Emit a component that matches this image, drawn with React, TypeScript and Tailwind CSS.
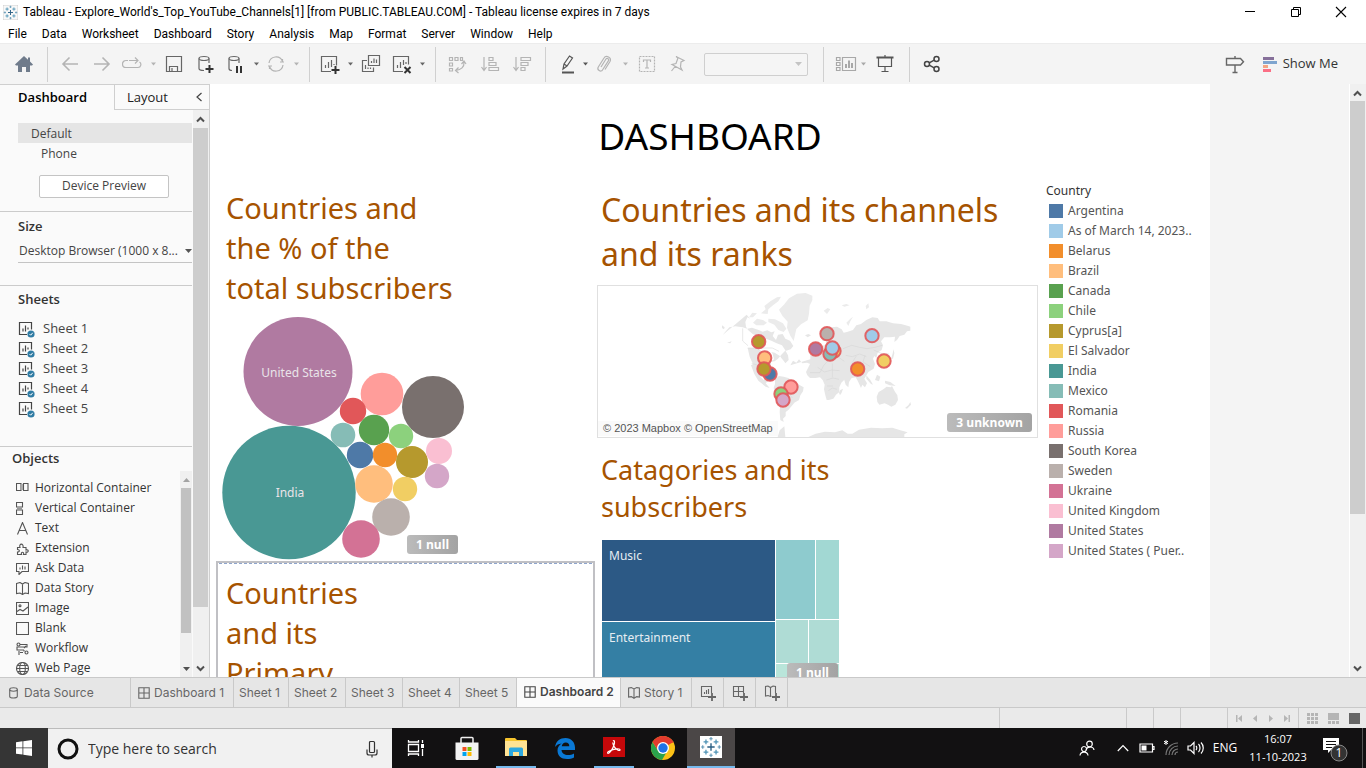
import React from "react";

type Kids = { children?: React.ReactNode };

function Ico({ w = 20, h = 20, children, sw = 1.2 }: Kids & { w?: number; h?: number; sw?: number }) {
  return (
    <svg width={w} height={h} viewBox={`0 0 ${w} ${h}`} fill="none" stroke="currentColor" strokeWidth={sw} className="shrink-0" aria-hidden="true">
      {children}
    </svg>
  );
}

function Tool({ label, cls, children }: Kids & { label: string; cls: string }) {
  return (
    <button aria-label={label} className={`flex h-full shrink-0 items-center justify-center ${cls}`}>
      {children}
    </button>
  );
}

function Caret() {
  return (
    <svg width="5" height="4" viewBox="0 0 5 4" fill="currentColor" aria-hidden="true">
      <path d="M0 0.5h5L2.5 3.5z" />
    </svg>
  );
}

function TableauMark({ size, plain }: { size: number; plain?: boolean }) {
  const small: [number, number][] = [[6.5, 6.5], [17.5, 6.5], [6.5, 17.5], [17.5, 17.5]];
  const tiny: [number, number][] = [[12, 3], [12, 21], [3, 12], [21, 12]];
  return (
    <svg width={size} height={size} viewBox="0 0 24 24" fill="none" aria-hidden="true">
      {!plain && <rect x="0" y="0" width="24" height="24" fill="#f8f8f8" stroke="#bbb" strokeWidth="1" />}
      <path d="M12 8v8M8 12h8" stroke="#2a5f83" strokeWidth="1.5" />
      {small.map(([x, y]) => (
        <path key={`${x}-${y}`} d={`M${x} ${y - 2.6}v5.2M${x - 2.6} ${y}h5.2`} stroke="#4d92b5" strokeWidth="1.4" />
      ))}
      {tiny.map(([x, y]) => (
        <path key={`${x}-${y}`} d={`M${x} ${y - 1.8}v3.6M${x - 1.8} ${y}h3.6`} stroke="#5f96b4" strokeWidth="1.2" />
      ))}
    </svg>
  );
}

const menus = ["File", "Data", "Worksheet", "Dashboard", "Story", "Analysis", "Map", "Format", "Server", "Window", "Help"];

function TitleBar() {
  return (
    <header className="flex h-6 shrink-0 items-center bg-white pl-[3px] text-[12px]">
      <TableauMark size={15} />
      <h1 className="ml-[5px] flex-1 whitespace-nowrap">
        Tableau - Explore_World's_Top_YouTube_Channels[1] [from PUBLIC.TABLEAU.COM] - Tableau license expires in 7 days
      </h1>
      <button aria-label="Minimize" className="flex h-full w-[46px] items-center justify-center">
        <Ico w={12} h={12} sw={1}><path d="M1 5.500h10" /></Ico>
      </button>
      <button aria-label="Restore" className="flex h-full w-[45px] items-center justify-center">
        <Ico w={12} h={12} sw={1}><path d="M1.500 3.500h7v7h-7zM3.500 3.500v-2h7v7h-2" /></Ico>
      </button>
      <button aria-label="Close" className="flex h-full w-12 items-center justify-center pr-0.5">
        <Ico w={12} h={12} sw={1.1}><path d="M1 1l10 10M11 1L1 11" /></Ico>
      </button>
    </header>
  );
}

function MenuBar() {
  return (
    <nav className="flex h-[19px] shrink-0 items-center gap-[15px] bg-white pl-2 text-[12px]">
      {menus.map((m) => (
        <button key={m}>{m}</button>
      ))}
    </nav>
  );
}

function Sep() {
  return <div className="w-px shrink-0 self-stretch bg-[#d0d0d0]" />;
}

function Toolbar() {
  return (
    <div className="flex h-[41px] shrink-0 items-center border-t border-[#ececec] bg-[#f4f4f4] text-[#666]">
      <div className="flex h-[35px] shrink-0 items-center">
        <Tool label="Home" cls="w-[47px] text-[#6f7b8b]">
          <svg width="18" height="16" viewBox="0 0 18 16" fill="currentColor" aria-hidden="true"><path d="M9 0l4 3.7V1.5h2v4L18 8.600l-1 .9h-2V16h-4v-5H7v5H3V9.500H1l-1-.9z" /></svg>
        </Tool>
        <Sep />
        <div className="flex h-full items-center pl-1.5 pr-[5px]">
          <Tool label="Undo" cls="w-8 text-[#b4b4b4]"><Ico sw={1.6}><path d="M3 10h15M9.500 3.500L3 10l6.500 6.500" /></Ico></Tool>
          <Tool label="Redo" cls="w-8 text-[#b4b4b4]"><Ico sw={1.6}><path d="M2 10h15M10.500 3.500L17 10l-6.500 6.500" /></Ico></Tool>
          <Tool label="Replay" cls="w-7 text-[#b4b4b4]"><Ico><path d="M6 6.500H4a3 3 0 0 0 0 7h12a3 3 0 0 0 1.500-5.500M7 6.500h9M13 3.500l3 3-3 3" /></Ico></Tool>
          <Tool label="Replay options" cls="w-3.5 text-[#b4b4b4]"><Caret /></Tool>
          <Tool label="Save" cls="w-7"><Ico><path d="M2.500 2.500h15v15h-15zM5.500 17v-4.500h8V17M8 14v3" /></Ico></Tool>
          <Tool label="New data source" cls="w-[34px]"><Ico><ellipse cx="9" cy="4.500" rx="5" ry="2" /><path d="M4 4.500v10c0 1 2 2 5 2M14 4.500V9" /><path d="M14.500 11v8M10.500 15h8" stroke="#333" strokeWidth="2" /></Ico></Tool>
          <Tool label="Pause updates" cls="w-[26px]"><Ico><ellipse cx="9" cy="4.500" rx="5" ry="2" /><path d="M4 4.500v10c0 1 1 2 3 2M14 4.500V9" /><path d="M12 12v7M16 12v7" stroke="#333" strokeWidth="2" /></Ico></Tool>
          <Tool label="Pause options" cls="w-4"><Caret /></Tool>
          <Tool label="Refresh" cls="w-6 text-[#b4b4b4]"><Ico><path d="M3 9a7 7 0 0 1 13.500-1.500M17 11a7 7 0 0 1-13.500 1.500M14 8h4M16.500 8V5M6 12H2M3.500 12v3" /></Ico></Tool>
          <Tool label="Refresh options" cls="w-4 text-[#b4b4b4]"><Caret /></Tool>
        </div>
        <Sep />
        <div className="flex h-full items-center pl-1.5 pr-[9px]">
          <Tool label="New worksheet" cls="w-7"><Ico><path d="M11 17.500H1.500v-15h15v9M5.500 14v-3M8.500 14V8M11.500 13V6M14 11v-1" /><path d="M15.500 12v8M11.500 16h8" stroke="#333" strokeWidth="2" /></Ico></Tool>
          <Tool label="New worksheet options" cls="w-3"><Caret /></Tool>
          <Tool label="Duplicate" cls="w-[30px]"><Ico><path d="M7.500 1.500h11v10h-11zM10.500 9V7M13 9V4.500M15.500 9V5.500M6 6.500H1.500v11h11v-4M4.500 15v-4M7 15v-1.500M9.500 15v-1.500" /></Ico></Tool>
          <Tool label="Clear" cls="w-8"><Ico><path d="M11 17.500H1.500v-15h15v8M5.500 14v-3M8.500 14V8M11.500 11V6M14 10V8" /><path d="M12.500 13l6 6M18.500 13l-6 6" stroke="#333" strokeWidth="2" /></Ico></Tool>
          <Tool label="Clear options" cls="w-2"><Caret /></Tool>
        </div>
        <Sep />
        <div className="flex h-full items-center pl-[5px] pr-2 text-[#b4b4b4]">
          <Tool label="Swap rows and columns" cls="w-8"><Ico><path d="M2.500 3.500h3v3h-3zM8 3.500h3v3H8zM13.500 3.500h2v3h-2zM2.500 9h3v3h-3zM2.500 14.500h3v2.500h-3zM17 8c.5 5-3 8-8 8.500M14.500 10L17 7l2 3M11.500 13.500L8.500 16.500l3 2.500" /></Ico></Tool>
          <Tool label="Sort ascending" cls="w-[34px]"><Ico><path d="M4 3v13M1.500 13L4 16.500 6.500 13M9 3.500h4v3H9zM9 8.500h7v3H9zM9 13.500h9.500v3H9z" /></Ico></Tool>
          <Tool label="Sort descending" cls="w-[30px]"><Ico><path d="M4 3v13M1.500 13L4 16.500 6.500 13M9 3.500h9.500v3H9zM9 8.500h7v3H9zM9 13.500h4v3H9z" /></Ico></Tool>
        </div>
        <Sep />
        <div className="flex h-full items-center pl-2.5 pr-[15px] text-[#b4b4b4]">
          <Tool label="Highlight" cls="w-6 text-[#555]"><Ico><path d="M5 15l1-5L11.500 2l3 2L9 12zM6 10l3 2" /><path d="M4 18.500h12" strokeWidth="2" /></Ico></Tool>
          <Tool label="Highlight options" cls="w-2.5 text-[#555]"><Caret /></Tool>
          <Tool label="Attach" cls="w-7"><Ico><path d="M7 13l5-8c1-1.500 3.500 0 2.500 1.600L8.500 16c-1.500 2.500-6 0-4.200-3L10 4c2-3.500 8-.5 6 3.500l-5 8" /></Ico></Tool>
          <Tool label="Attach options" cls="w-3.5"><Caret /></Tool>
          <Tool label="Show labels" cls="w-[30px]"><Ico><path d="M2.500 2.500h15v15h-15z" strokeDasharray="2 1" /><path d="M6.500 8V6h7v2M10 6v8M8 14h4" /></Ico></Tool>
          <Tool label="Fix axes" cls="w-[30px]"><Ico><path d="M9 2.500l8 4-3 1.500-.5 5 1.500 3-10-5.500 4-1 2-5.500zM8.500 12l-4 5" /></Ico></Tool>
          <select aria-label="Fit" disabled className="ml-3 h-[23px] w-[104px] appearance-none rounded-xs border border-[#cfcfcf] bg-[#f5f5f5]" />
          <span className="-ml-[13px] flex w-[13px] text-[#c4c4c4]"><svg width="7" height="4" viewBox="0 0 7 4" fill="currentColor" aria-hidden="true"><path d="M0 0h7L3.500 4z" /></svg></span>
        </div>
        <Sep />
        <div className="flex h-full items-center pl-2.5 pr-[7px] text-[#a8a8a8]">
          <Tool label="Show or hide cards" cls="w-6"><Ico w={22}><path d="M1.500 3.500h3.500v3H1.500zM1.500 8.500h3.500v3H1.500zM1.500 13.500h3.500v3H1.500zM7.500 3.500h13v13h-13z" /><path d="M11 14v-4M14 14V6.500M17 14V9" strokeWidth="2" /></Ico></Tool>
          <Tool label="Card options" cls="w-2.5"><Caret /></Tool>
          <Tool label="Presentation mode" cls="w-[34px] text-[#555]"><Ico><path d="M3.500 4v8.500h13V4M10 12.500V17M6.500 17.500h7M10 1v2" /><path d="M1.500 3.500h17" strokeWidth="2" /></Ico></Tool>
        </div>
        <Sep />
        <Tool label="Share" cls="ml-2.5 w-6 text-[#444]"><Ico sw={1.5}><circle cx="5" cy="10" r="2.500" /><circle cx="14.500" cy="5" r="2.500" /><circle cx="14.500" cy="15" r="2.500" /><path d="M7.200 8.800l5-2.600M7.200 11.200l5 2.600" /></Ico></Tool>
      </div>
      <div className="flex-1" />
      <Tool label="Guide" cls="w-8 text-[#666]"><Ico sw={1.4}><path d="M1.500 4.500h14l3 3.200-3 3.300h-14zM10 2v2.500M10 11v7M7.500 18.500h5" /></Ico></Tool>
      <button className="mr-7 flex items-center gap-1.5 pl-3 font-['Open_Sans',sans-serif] text-[13px] text-[#333]">
        <svg width="14" height="15" viewBox="0 0 14 15" aria-hidden="true">
          <path fill="#86709a" d="M0 0h11v3H0z" /><path fill="#7fa5cf" d="M0 4h14v3H0z" /><path fill="#f4a582" d="M0 8h5v3H0z" /><path fill="#fb6f85" d="M0 12h8v3H0z" />
        </svg>
        Show Me
      </button>
    </div>
  );
}

const sheets = ["Sheet 1", "Sheet 2", "Sheet 3", "Sheet 4", "Sheet 5"];

const objects: { name: string; icon: React.ReactNode }[] = [
  { name: "Horizontal Container", icon: <><path d="M.5 1.500h4.500v7H.5zM7.500 1.500H12v7H7.500z" /><path d="M5 2h2v6H5z" fill="#aaa" stroke="none" /></> },
  { name: "Vertical Container", icon: <><path d="M.5 .5h6V5h-6zM.5 8h6v4.500h-6z" /><path d="M1 5.500h5V8H1z" fill="#999" stroke="none" /></> },
  { name: "Text", icon: <path d="M1.500 12.500L6.500 .5l5 12M3.500 8.500h6" /> },
  { name: "Extension", icon: <path d="M1.500 5.500H4C2.500 1 8 1 7 5.500h3V8c3-1 3 3 0 2v2.500H7.500c1-3-3-3-2 0h-4V10c2.500 0 2.500-2.500 0-2.500z" /> },
  { name: "Ask Data", icon: <><path d="M.5 1.500h12v8H6l-3 3v-3H.5z" /><path d="M4 7.500v-2M6.500 7.500v-4M9 7.500v-3" /></> },
  { name: "Data Story", icon: <path d="M.5 1.500l3.500-1 2.500 1.500L9 .5l3.500 1v10l-3.500-.5-2.500 1.500L4 11l-3.500.5zM6.500 2v10" /> },
  { name: "Image", icon: <><path d="M.5 .5h12v12H.5zM1 9.500l3-2 3 1.500 5-4" /><circle cx="4" cy="3.800" r="1" /></> },
  { name: "Blank", icon: <path d="M.5 .5h12v12H.5z" /> },
  { name: "Workflow", icon: <><circle cx="2.500" cy="2.500" r="1.500" /><circle cx="10.500" cy="10.500" r="1.500" /><path d="M4 2.500h7v2.500H1v3h7M8 6l2-2M4 10.500h3M3 9v4M8 9.500V8" /></> },
  { name: "Web Page", icon: <><circle cx="6.500" cy="6.500" r="6" /><ellipse cx="6.500" cy="6.500" rx="2.800" ry="6" /><path d="M.5 6.500h12M1.500 3.500h10M1.500 9.500h10" /></> },
];

function Chevron({ up }: { up?: boolean }) {
  return <Ico w={9} h={7} sw={2}>{up ? <path d="M1 5.500l3.500-3.500L8 5.500" /> : <path d="M1 1.500L4.500 5 8 1.500" />}</Ico>;
}

function SidePanel() {
  return (
    <aside className="flex w-[210px] shrink-0 flex-col border-r border-[#cfcfcf] bg-[#fafafa] font-['Open_Sans',sans-serif] text-[#444]">
      <div className="flex h-[26px] shrink-0 border-t border-[#cfcfcf] text-[13px]">
        <button className="w-[114px] pr-[27px] pt-px text-right font-semibold text-black">Dashboard</button>
        <div className="flex flex-1 items-center justify-between border-b border-l border-[#cfcfcf] pl-3 pr-1.5">
          <button className="pt-px text-[#222]">Layout</button>
          <button aria-label="Collapse panel"><Ico w={8} h={10}><path d="M6.500 1L2 5l4.500 4" /></Ico></button>
        </div>
      </div>
      <div className="flex min-h-0 flex-1">
        <div className="flex min-w-0 flex-1 flex-col">
          <section className="pb-[13px] pl-[18px] pt-[13px] text-[12px]">
            <button className="block h-5 w-full bg-[#e5e5e5] pl-[13px] pt-px text-left">Default</button>
            <button className="block h-5 w-full pl-[23px] pt-px text-left">Phone</button>
            <button className="ml-[21px] mt-3 block h-[23px] w-[130px] rounded-xs border border-[#c4c4c4] bg-white pb-px">Device Preview</button>
          </section>
          <section className="border-t border-[#cbcbcb] pb-[22px] pl-[18px] pt-1 text-[12px]">
            <label htmlFor="size" className="block h-5 text-[13px] font-semibold leading-5 text-[#333]">Size</label>
            <div className="mt-1 flex h-[23px] items-center border-b border-[#c4c4c4]">
              <select id="size" className="min-w-0 flex-1 appearance-none whitespace-nowrap pl-px">
                <option>Desktop Browser (1000 x 8...</option>
              </select>
              <svg width="7" height="4" viewBox="0 0 7 4" fill="#555" aria-hidden="true"><path d="M0 0h7L3.500 4z" /></svg>
            </div>
          </section>
          <section className="border-t border-[#cbcbcb] pb-[27px] pl-[18px] pt-[3px]">
            <h2 className="h-5 text-[13px] font-semibold leading-5 text-[#333]">Sheets</h2>
            <ul className="mt-2.5 text-[13px]">
              {sheets.map((s) => (
                <li key={s} className="flex h-5 items-center gap-2">
                  <Ico w={17} h={17}>
                    <path d="M9 13.500H1.500v-12h12v7M5 10.500v-3M7.500 10.500v-6M10 8.500v-2" />
                    <circle cx="13" cy="13" r="3.600" fill="#2f7ba3" stroke="none" />
                    <path d="M11.500 13l1.200 1.200 2-2.400" stroke="white" strokeWidth="1" />
                  </Ico>
                  {s}
                </li>
              ))}
            </ul>
          </section>
          <section className="flex min-h-0 flex-1 flex-col border-t border-[#cbcbcb] pt-px">
            <h2 className="h-5 shrink-0 pl-3 text-[13px] font-semibold leading-5 text-[#333]">Objects</h2>
            <div className="mt-[3px] flex min-h-0 flex-1">
              <ul className="flex-1 overflow-hidden pl-4 pt-[7px] text-[12px]">
                {objects.map((o) => (
                  <li key={o.name} className="flex h-5 items-center gap-1.5 text-[#555]">
                    <Ico w={13} h={13} sw={1.1}>{o.icon}</Ico>
                    <span className="whitespace-nowrap text-[#333]">{o.name}</span>
                  </li>
                ))}
              </ul>
              <div className="flex w-3 flex-col items-center bg-[#f0f0f0] pb-1.5 pt-[7px]">
                <svg width="7" height="4" viewBox="0 0 7 4" fill="#a3a3a3" aria-hidden="true"><path d="M0 4h7L3.500 0z" /></svg>
                <div className="mt-1.5 w-2.5 flex-1 bg-[#c1c1c1]" />
                <div className="h-[34px]" />
                <svg width="7" height="4" viewBox="0 0 7 4" fill="#505050" aria-hidden="true"><path d="M0 0h7L3.500 4z" /></svg>
              </div>
            </div>
          </section>
        </div>
        <div className="ml-px flex w-4 flex-col items-center bg-[#f0f0f0] pb-[5px] pr-px pt-1.5 text-[#505050]">
          <Chevron up />
          <div className="mt-[5px] w-[15px] flex-1 bg-[#cdcdcd]" />
          <div className="h-[58px]" />
          <Chevron />
        </div>
      </div>
    </aside>
  );
}

/* x, y, radius and fill, in a box whose origin is the chart's top-left corner */
const bubbles: [number, number, number, string][] = [
  [82, 61.500, 54.500, "#b07aa1"],
  [73, 182.500, 66.700, "#499894"],
  [166, 84, 21.300, "#ff9d9a"],
  [217, 97, 31, "#79706e"],
  [137, 101, 13.200, "#e15759"],
  [127, 125, 12.300, "#86bcb6"],
  [158, 120, 15.200, "#59a14f"],
  [185, 126, 12.200, "#8cd17d"],
  [144, 145, 13.200, "#4e79a7"],
  [169, 145, 12.200, "#f28e2b"],
  [196, 152, 16, "#b6992d"],
  [223, 141, 13, "#fabfd2"],
  [221, 166, 12.200, "#d4a6c8"],
  [158, 174, 18.800, "#ffbe7d"],
  [189, 179, 12.200, "#f1ce63"],
  [175, 207, 18.800, "#bab0ac"],
  [145, 229, 18.800, "#d37295"],
];

function Badge({ children }: Kids) {
  return (
    <button className="block h-[19px] rounded-[3px] bg-linear-to-r from-[#bbbbbb] to-[#a3a3a3] px-[9px] font-['Open_Sans',sans-serif] text-[12px] font-bold leading-[19px] text-white">
      {children}
    </button>
  );
}

function BubbleChart() {
  return (
    <div className="relative mt-0.5 h-[251px]">
      <svg width="260" height="251" viewBox="0 0 260 251" role="img" aria-label="Share of subscribers by country">
        {bubbles.map(([x, y, r, c]) => (
          <circle key={`${x}-${y}`} cx={x} cy={y} r={r} fill={c} />
        ))}
        <g fill="#e9e4e9" fontSize="12" textAnchor="middle">
          <text x="83" y="67">United States</text>
          <text x="74" y="187">India</text>
        </g>
      </svg>
      <div className="absolute left-[191px] top-[225px]"><Badge>1 null</Badge></div>
    </div>
  );
}

const marks: [number, number, string][] = [
  [491, 185, "#b6992d"], [509, 234, "#ffbe7d"], [525, 282, "#4e79a7"], [507, 267, "#b6992d"],
  [588, 321, "#ff9d9a"], [558, 342, "#8cd17d"], [564, 360, "#d4a6c8"],
  [696, 161, "#bab0ac"], [662, 207, "#b07aa1"], [717, 213, "#f1ce63"], [705, 222, "#86bcb6"], [712, 204, "#a0cbe8"],
  [831, 167, "#a0cbe8"], [867, 243, "#f1ce63"], [788, 267, "#f28e2b"],
];

function WorldMap() {
  return (
    <div className="relative mt-[9px] h-[153px] border border-[#e0e0e0]">
      <svg width="100%" height="151" viewBox="9 18 1317 453" role="img" aria-label="Map of channels by country">
        <g fill="#e6e6e6">
          <path d="M381 136l8 6-2 6-6-4zM396 188l14-4-4 6zM383 165l8-10 12-13 18-3 22 3 14 4 14-3 20 7 12 5 14-4 12 6 10-3-6 14 10 12 6-16 14-2 8 14 14 6 10 16-8 10-18 6-10 10-10 12-10 8-14 2 12-8-4-16-4-6 10 2 16 10 4 6 8 10 4 6 10-10-2-14-10-18-8-12-16-6-16-8-16-6-20-4-20-10-14-12-6-10-2-14 6-14 8 4-10-12-2z" />
          <path d="M488 204l14 12-6 30-8 14-16-12-8-18-6-26zM494 240l34 2 0 22-6 8-12-4-12 8-2 14 10 10 12-6 2 8-8 8 12 14-12-4-22-18-12-20-10-26z" />
          <path d="M540 298l12-10 14 2 14 4 12 10 16 8 18 10-2 12-8 12-4 14-14 8-8 10-10 12-8 6 0 12-8 8 2 10-10-6-2-24 2-28-8-18-8-14-4-12 4-12z" />
          <path d="M645 252l14-10 22-2 16 4 12 4 16 0 8 14 8 14 6 8 12 0-8 12-12 12-6 14 0 14-10 8-8 12-14 4-6 0-4-14-4-18 2-14-6-14-8-8-14 2-16 0-8-8-4-10z" />
          <path d="M646 238v-14l14-2-4-12 14-4 12-8 10-4 2-10-12-2-4-12 12-16 18-12 18-2 14 8 6 10 10-2 18-6 10-14 14-4 16-12 18-8 16 2 6 10 20 0 20 6 24 2 22 6 6 2v12l-10 2-8 10-14 4-8 12-8 6 2-16-14 2-18 0-10 12 6 12-4 14-12 8-4 16-6-6-4 8 6 16-4 14-16 10-6 10-6 10 8 14-6 12-8-8-4 10-10-22-6-10-12 2-8 12-2 16-8-8-6-20-8-8-14-4-4 12-18 12-6 4-10-16-12-20-6-10-18-2-4-10-10-4-14 2-10-12-8 10-10-6-8 14z" />
          <path d="M845 350l6-14 14-8 10-8 12 2 4-4 8 16 8 12 2 14-8 14-12 6-10-6-10-4-16 4-6-8zM930 384l10-8 6-10 2 8-12 12zM744 326l-4 12-5 8-3-8 4-8zM814 286l12 14 8 14-6-2-14-16zM846 284l10 6-4 14-12-4zM870 302l16 4 16 12-18-2-14-6zM888 236l4-12 4-16 2 12-4 16zM652 208l6-16 6 12 2 8zM630 166l10-4 8 4-10 6z" />
          <path d="M640 471l22-10 28-6 30 2 22-6 16 10 14 0 20-12 36-6 34 2 30-2 24 8 22 6-10 6v8zM548 471l6-20 14-12 3 32z" />
        </g>
        <g fill="#ebebeb">
          <path d="M596 183l-10-16-10-24 2-18-16-18-10-18 16-16 14-18 24-14 26-2 20 8 0 14-8 16-2 24-4 20-20 12-14 14z" />
          <path d="M498 100l14-12-4-10 18-14 20-12 12-2-8 14-16 12-14 12-2 14zM474 128l12-12 18 4 12 8-10 8-22 0zM520 116l20 2 24 12 10 16-8 10-16-6-12-16-18-8zM462 112l10-14 14 2-12 12zM686 92l12-8 8 4-10 14zM754 128l12-12 8-6-8 14-6 14zM812 78l8-8 2 12-8 6zM740 76l14-4 10 4-16 4z" />
        </g>
        <g fill="none" stroke="#d2d2d2" strokeWidth="1.500">
          <path d="M443 145v38l16 14M458 204h74l20 10M470 250l26 8M645 278h30l10-20 12-14M668 262l20 14 22-6 24 2M694 300l20-6 18 4M700 332l12-8 14 4M696 318h18M712 250v42M564 312l14 22 14 20M552 330l16-2M556 372l14-8M744 206l26-10 24 6 22 4 24-4 22-6M752 226l20 4 22-8 20 8M770 250l14-22M810 226l-6 20 22 14M728 230l20 14M836 210l22 10 24 2" />
        </g>
        {marks.map(([x, y, c]) => (
          <circle key={`${x}-${y}`} cx={x} cy={y} r="20" fill={c} stroke="#e15759" strokeWidth="6" strokeOpacity="0.9" />
        ))}
      </svg>
      <div className="absolute bottom-px left-0 bg-[#fafafa] px-[5px] font-['Liberation_Sans',sans-serif] text-[11px] leading-[15px] text-[#555]">© 2023 Mapbox © OpenStreetMap</div>
      <div className="absolute bottom-[5px] right-[5px]"><Badge>3 unknown</Badge></div>
    </div>
  );
}

function Treemap() {
  return (
    <div className="relative ml-[5px] mt-[15px] flex h-[180px] w-[237px] gap-px text-[12px] text-[#e6edf2]">
      <div className="flex w-[173px] flex-col gap-px">
        <div className="h-[81px] bg-[#2c5985] px-[7px] pt-[7px]">Music</div>
        <div className="flex-1 bg-[#347fa4] px-[7px] pt-[7px]">Entertainment</div>
      </div>
      <div className="flex flex-1 flex-col gap-px">
        <div className="flex h-[79px] gap-px"><div className="w-[39px] bg-[#8ecbce]" /><div className="flex-1 bg-[#a2d8d3]" /></div>
        <div className="flex h-[43px] gap-px"><div className="w-8 bg-[#afdcd5]" /><div className="flex-1 bg-[#afdcd5]" /></div>
        <div className="flex flex-1 gap-px"><div className="w-[37px] bg-[#b9e5da]" /><div className="flex-1 bg-[#b9e5da]" /></div>
      </div>
      <div className="absolute right-px top-[123px]"><Badge>1 null</Badge></div>
    </div>
  );
}

const legend: [string, string][] = [
  ["Argentina", "#4e79a7"], ["As of March 14, 2023..", "#a0cbe8"], ["Belarus", "#f28e2b"], ["Brazil", "#ffbe7d"],
  ["Canada", "#59a14f"], ["Chile", "#8cd17d"], ["Cyprus[a]", "#b6992d"], ["El Salvador", "#f1ce63"],
  ["India", "#499894"], ["Mexico", "#86bcb6"], ["Romania", "#e15759"], ["Russia", "#ff9d9a"],
  ["South Korea", "#79706e"], ["Sweden", "#bab0ac"], ["Ukraine", "#d37295"], ["United Kingdom", "#fabfd2"],
  ["United States", "#b07aa1"], ["United States ( Puer..", "#d4a6c8"],
];

function Canvas() {
  return (
    <main className="flex min-w-0 flex-1 overflow-hidden bg-[#f4f4f4] font-['Noto_Sans',sans-serif]">
      <div className="w-[1000px] shrink-0 bg-white">
        <h2 className="pt-[30px] text-center text-[37px] leading-[44px] text-black">DASHBOARD</h2>
        <div className="flex pl-1.5 text-[#a65300]">
          <div className="w-[379px] shrink-0 pt-[30px]">
            <h3 className="pl-2.5 text-[29px] leading-[40px]">Countries and<br />the % of the<br />total subscribers</h3>
            <BubbleChart />
            <section className="h-[240px] border-2 border-[#c0c0c4] p-px">
              <div className="-mt-px border-t border-dashed border-[#8fa5cc]" />
              <h3 className="pl-[7px] pt-[9px] text-[29px] leading-[40px]">Countries<br />and its<br />Primary</h3>
            </section>
          </div>
          <div className="ml-0.5 w-[441px] shrink-0 pt-[30px]">
            <h3 className="pl-1 text-[32px] leading-[44px]">Countries and its channels<br />and its ranks</h3>
            <WorldMap />
            <h3 className="pl-1 pt-[13px] text-[27px] leading-[37px]">Catagories and its<br />subscribers</h3>
            <Treemap />
          </div>
          <div className="ml-2 pt-[23px] text-[12px] text-[#555]">
            <h4 className="h-5 leading-5 text-[#333]">Country</h4>
            <ul>
              {legend.map(([name, color]) => (
                <li key={name} className="flex h-5 items-center gap-[5px] pl-[3px]">
                  <span className="size-3.5" style={{ backgroundColor: color }} />
                  <span className="whitespace-nowrap">{name}</span>
                </li>
              ))}
            </ul>
          </div>
        </div>
      </div>
      <div className="flex-1" />
      <div className="flex w-[17px] flex-col items-center border-l border-white bg-[#f0f0f0] pb-[5px] pr-px pt-1.5 text-[#505050]">
        <Chevron up />
        <div className="mt-1 w-[15px] flex-1 bg-[#cdcdcd]" />
        <div className="h-[151px]" />
        <Chevron />
      </div>
    </main>
  );
}

function GridIcon() {
  return <Ico w={12} h={12} sw={1.1}><path d="M.8 .8h10.400v10.400H.8zM6 1v10M1 6h10" /></Ico>;
}
function BookIcon() {
  return <Ico w={12} h={12} sw={1.1}><path d="M.6 1l2.700-.4L6 2l2.700-1.400 2.700 .4v9l-2.700-.4L6 11.300l-2.700-1.700-2.700 .4zM6 2v9" /></Ico>;
}

function SheetTabs() {
  const tab = "flex h-full shrink-0 items-center whitespace-nowrap border-r border-[#c9c9c9]";
  return (
    <nav className="flex h-[31px] shrink-0 border-y border-[#c9c9c9] bg-[#e6e6e6] font-['Inter',sans-serif] text-[12px] text-[#666]">
      <button className={`${tab} w-[131px] gap-1.5 pl-[9px]`}>
        <Ico w={9} h={12} sw={1.1}><ellipse cx="4.500" cy="2.500" rx="3.800" ry="1.700" /><path d="M.7 2.500v7c0 2 7.600 2 7.600 0v-7" /></Ico>
        Data Source
      </button>
      <button className={`${tab} w-[103px] gap-1 pl-[7px]`}><GridIcon />Dashboard 1</button>
      <button className={`${tab} w-[55px] pl-[5px]`}>Sheet 1</button>
      {sheets.slice(1).map((s) => (
        <button key={s} className={`${tab} w-[57px] pl-[5px]`}>{s}</button>
      ))}
      <button className={`${tab} w-[104px] gap-1 bg-[#fafafa] pb-px pl-[7px] font-semibold text-[#444]`}><GridIcon />Dashboard 2</button>
      <button className={`${tab} w-[71px] gap-1 pl-[7px]`}><BookIcon />Story 1</button>
      <button aria-label="New worksheet" className={`${tab} w-8 justify-center`}>
        <Ico w={16} h={16} sw={1.1}><path d="M8 11.500H1.500v-10h10V8M4.500 9V7M6.500 9V5M8.500 9V4" /><path d="M12 8v8M8 12h8" strokeWidth="1.800" /></Ico>
      </button>
      <button aria-label="New dashboard" className={`${tab} w-8 justify-center`}>
        <Ico w={16} h={16} sw={1.1}><path d="M8 11.500H1.500v-10h10V8M6.500 2v9M2 6.500h9" /><path d="M12 8v8M8 12h8" strokeWidth="1.800" /></Ico>
      </button>
      <button aria-label="New story" className={`${tab} w-8 justify-center`}>
        <Ico w={16} h={16} sw={1.1}><path d="M7.500 11l-1 .5L4 10.500l-2.500.5v-9.500L4 1l2.500 1.500L9 1l2.500.5V8M6.500 2.500v9" /><path d="M12 8v8M8 12h8" strokeWidth="1.800" /></Ico>
      </button>
    </nav>
  );
}

function StatusBar() {
  const cell = "h-full border-l border-[#cacaca]";
  return (
    <footer className="flex h-5 shrink-0 justify-end bg-[#eaeaea] text-[#b5b5b5]">
      <div className={`${cell} w-[127px]`} />
      <div className={`${cell} w-[27px]`} />
      <div className={`${cell} w-[27px]`} />
      <div className={`${cell} w-[47px]`} />
      <div className={`${cell} flex w-[71px] items-center justify-around px-[3px]`}>
        {["M1 0h1.500v7H1zM7 0v7L3 3.500z", "M6 0v7L2 3.500z", "M2 0v7l4-3.500z", "M1 0v7l4-3.500zM5.500 0H7v7H5.500z"].map((d, i) => (
          <button key={d} aria-label={["First", "Previous", "Next", "Last"][i]}><svg width="8" height="7" viewBox="0 0 8 7" fill="currentColor"><path d={d} /></svg></button>
        ))}
      </div>
      <div className={`${cell} flex w-[68px] items-center justify-between pl-2 pr-[6px]`}>
        <button aria-label="Filmstrip grid"><svg width="11" height="11" viewBox="0 0 11 11" fill="currentColor"><path d="M0 0h3v3H0zM4 0h3v3H4zM8 0h3v3H8zM0 4h3v3H0zM4 4h3v3H4zM8 4h3v3H8zM0 8h3v3H0zM4 8h3v3H4zM8 8h3v3H8z" /></svg></button>
        <button aria-label="Filmstrip"><svg width="11" height="11" viewBox="0 0 11 11" fill="currentColor"><path d="M0 0h11v7H0zM0 8h3v3H0zM4 8h3v3H4zM8 8h3v3H8z" /></svg></button>
        <button aria-label="Single sheet"><svg width="11" height="11" viewBox="0 0 11 11" fill="#666"><path d="M0 0h11v11H0z" /></svg></button>
      </div>
    </footer>
  );
}

function TaskbarApp({ label, open, active, children }: Kids & { label: string; open?: boolean; active?: boolean }) {
  return (
    <button aria-label={label} className={`flex h-full shrink-0 flex-col items-center ${active ? "w-12 bg-[#4b4747]" : "w-[49px]"}`}>
      <span className="flex flex-1 items-center">{children}</span>
      {open && <span className="h-0.5 w-10 bg-[#76b9ed]" />}
      {active && <span className="h-0.5 w-full bg-[#76b9ed]" />}
    </button>
  );
}

function Taskbar() {
  return (
    <footer className="flex h-10 shrink-0 bg-[#121112] font-['Open_Sans',sans-serif] text-[11px] text-white">
      <button aria-label="Start" className="flex w-12 shrink-0 items-center justify-center bg-[#353535]">
        <svg width="16" height="16" viewBox="0 0 16 16" fill="white"><path d="M0 2.200l6.500-.9v6.200H0zM7.300 1.200L16 0v7.500H7.300zM0 8.300h6.500v6.200L0 13.700zM7.300 8.300H16V16l-8.700-1.300z" /></svg>
      </button>
      <label className="flex w-[344px] shrink-0 items-center border-t border-[#bcbcbc] bg-[#f1f1f1] pl-[9px] pr-3 text-[#333]">
        <svg width="22" height="22" viewBox="0 0 22 22" aria-hidden="true"><circle cx="11" cy="11" r="9" fill="none" stroke="#111" strokeWidth="3" /></svg>
        <input aria-label="Search" placeholder="Type here to search" className="ml-[9px] min-w-0 flex-1 bg-transparent text-[14px] outline-none placeholder:text-[#333]" />
        <Ico w={16} h={18} sw={1.2}><rect x="5.500" y="1.500" width="5" height="11" rx="1" /><path d="M3 9.500V13a2 2 0 0 0 2 2h6a2 2 0 0 0 2-2V9.500M8 15v2.500" /></Ico>
      </label>
      <button aria-label="Task view" className="flex w-[50px] shrink-0 items-center justify-center pr-0.5">
        <Ico w={18} h={18} sw={1.3}><path d="M1.500 5.500h10v7h-10zM1.500 1v2h10V1M1.500 17v-2h10v2M15.500 1v3M15.500 10v7" /><path d="M15.500 5v4" strokeWidth="3" /></Ico>
      </button>
      <TaskbarApp label="Microsoft Store">
        <svg width="24" height="24" viewBox="0 0 24 24"><path d="M6 8V2.500a1 1 0 0 1 1-1h10a1 1 0 0 1 1 1V8" fill="none" stroke="#eee" strokeWidth="1.500" /><path d="M.5 6.500h23v16a1.500 1.500 0 0 1-1.500 1.500H2a1.500 1.500 0 0 1-1.500-1.500z" fill="#f3f3f3" /><path fill="#f25022" d="M7.500 11h4v4h-4z" /><path fill="#7fba00" d="M12.500 11h4v4h-4z" /><path fill="#00a4ef" d="M7.500 16h4v4h-4z" /><path fill="#ffb900" d="M12.500 16h4v4h-4z" /></svg>
      </TaskbarApp>
      <TaskbarApp label="File Explorer" open>
        <svg width="22" height="20" viewBox="0 0 22 20"><path d="M0 2a1 1 0 0 1 1-1h9l2 2h9a1 1 0 0 1 1 1v14a1 1 0 0 1-1 1H0z" fill="#f7c52e" /><path d="M0 4h22v15H0z" fill="#ffe394" /><path d="M4 19v-7a1.500 1.500 0 0 1 1.500-1.500h11A1.500 1.500 0 0 1 18 12v7h-4v-4H8v4z" fill="#2ca8e0" /></svg>
      </TaskbarApp>
      <TaskbarApp label="Edge">
        <svg width="22" height="22" viewBox="0 0 22 22"><path d="M1 10C2 4 6 1 11.500 1 17.500 1 21 5.500 21 10.500V13H7.500c.3 3.500 3 5 6.500 5 2.200 0 4.200-.6 6-1.600v4C18 21.500 15.700 22 13 22 7 22 3.500 18.500 3.500 13.500c0-3 1.600-5.500 4.200-7C4.500 6.800 2.500 8 1 10zm6.700-.7h7.600C15.300 6.700 14 5.500 11.800 5.500c-2.100 0-3.700 1.400-4.100 3.800z" fill="#0a78d4" /></svg>
      </TaskbarApp>
      <TaskbarApp label="Acrobat Reader" open>
        <svg width="22" height="20" viewBox="0 0 22 20"><path d="M0 0h22v20H0z" fill="#c5080a" /><path d="M10 4c1.500-1.500 2 1 1 4-1 3-3 6.500-5 8-1.500 1-2-.5-.5-1.500C8 13 13 11.500 16 12c2 .5 1 2-1 1.200C12 12 10 8 9.700 5.500" fill="none" stroke="white" strokeWidth="1.200" /></svg>
      </TaskbarApp>
      <TaskbarApp label="Chrome">
        <svg width="24" height="24" viewBox="0 0 24 24"><circle cx="12" cy="12" r="12" fill="#fbc116" /><path d="M12 12L1.600 6A12 12 0 0 1 22.400 6z" fill="#e33b2e" /><path d="M1.600 6A12 12 0 0 0 11 24l5.500-9.500L7 14.500z" fill="#2ba24c" /><path d="M1.600 6h20.800v.5H12l-5 8z" fill="#e33b2e" /><circle cx="12" cy="12" r="6" fill="white" /><circle cx="12" cy="12" r="4.700" fill="#1f73e8" /></svg>
      </TaskbarApp>
      <TaskbarApp label="Tableau" active>
        <span className="bg-white"><TableauMark size={22} plain /></span>
      </TaskbarApp>
      <div className="flex-1" />
      <button aria-label="People" className="mr-2.5 flex w-7 items-center justify-center"><Ico w={16} h={16}><circle cx="10.500" cy="4" r="2.800" /><path d="M7 10c1-4 7.500-4 8 0M5 6.500a2.500 2.500 0 1 0 .1 0M1 15.500c.5-4.500 7.500-4.500 8 0" /></Ico></button>
      <button aria-label="Show hidden icons" className="flex w-6 items-center justify-center"><Ico w={12} h={8}><path d="M.8 7L6 1.500 11.200 7" /></Ico></button>
      <button aria-label="Battery" className="flex w-6 items-center justify-center"><Ico w={16} h={12}><path d="M1 2h12.500v8H1zM13.500 4.500h1.500v3h-1.500" /><path d="M2.500 3.500h5v5h-5z" fill="white" stroke="none" /></Ico></button>
      <button aria-label="Network" className="flex w-6 items-center justify-center"><Ico w={16} h={16}><g stroke="#777"><path d="M3 15A12 12 0 0 1 15 3M6 15a9 9 0 0 1 9-9M9 15a6 6 0 0 1 6-6M12 15a3 3 0 0 1 3-3" /></g><path d="M3 0v5M1 1.200l4 2.500M5 1.200L1 3.700" strokeWidth="1" /></Ico></button>
      <button aria-label="Volume" className="flex w-6 items-center justify-center"><Ico w={17} h={14}><path d="M1 5h2.500L7 1.500v11L3.500 9H1zM9 5c1 1 1 3 0 4M11.500 3c2 2 2 6 0 8M14 1.500c3 3 3 8 0 11" /></Ico></button>
      <button className="w-9 text-center text-[12px]">ENG</button>
      <button className="w-[70px] text-center leading-[18px]">16:07<br />11-10-2023</button>
      <button aria-label="1 notification" className="flex w-11 items-center justify-center pt-1">
        <svg width="26" height="26" viewBox="0 0 26 26"><path d="M1 1h16v12H9l-3 3v-3H1z" fill="white" /><path d="M4 4.500h10M4 7.500h10M4 10.500h6" stroke="#111" /><circle cx="17" cy="16" r="8" fill="#333" stroke="#888" /><text x="17" y="20" textAnchor="middle" fontSize="12" fill="white">1</text></svg>
      </button>
      <div className="mr-[3px] w-1.5 border-r border-[#555]" />
    </footer>
  );
}

export default function App() {
  return (
    <div className="flex h-screen flex-col overflow-hidden bg-white font-['Roboto',sans-serif] text-black">
      <TitleBar />
      <MenuBar />
      <Toolbar />
      <div className="flex min-h-0 flex-1">
        <SidePanel />
        <Canvas />
      </div>
      <SheetTabs />
      <StatusBar />
      <Taskbar />
    </div>
  );
}
